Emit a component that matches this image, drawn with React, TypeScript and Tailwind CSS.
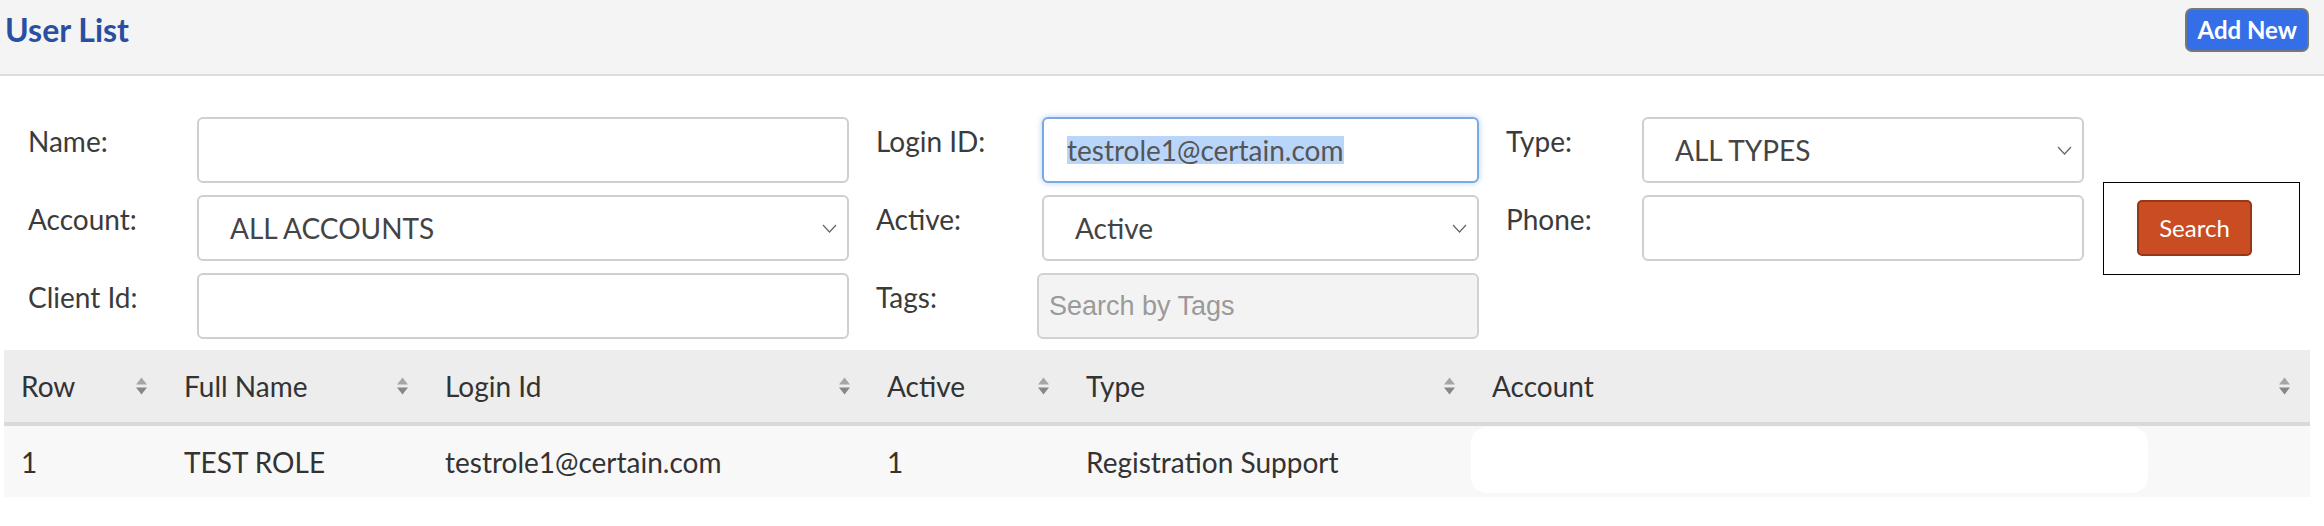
const FONT = "font-['Lato','Liberation_Sans',sans-serif]"

const COLUMNS = [
  { label: 'Row', w: 'w-[163px]' },
  { label: 'Full Name', w: 'w-[261px]' },
  { label: 'Login Id', w: 'w-[442px]' },
  { label: 'Active', w: 'w-[199px]' },
  { label: 'Type', w: 'w-[406px]' },
  { label: 'Account', w: 'w-[835px]' },
]

const ROW = ['1', 'TEST ROLE', 'testrole1@certain.com', '1', 'Registration Support']

function SortIcon() {
  return (
    <svg width="13" height="20" viewBox="0 0 13 20" className="shrink-0">
      <path d="M6.5 1.5 L12 8.5 H1 Z" fill="#a6a6a6" />
      <path d="M1 11.5 H12 L6.5 18.5 Z" fill="#878787" />
    </svg>
  )
}

function Chevron() {
  return (
    <svg width="15" height="9" viewBox="0 0 15 9" className="shrink-0">
      <path d="M1 1 L7.5 8 L14 1" fill="none" stroke="#666" strokeWidth="1.2" />
    </svg>
  )
}

function Label({ text, indent }: { text: string; indent?: boolean }) {
  return (
    <div className={`pt-[8px] text-[28px] leading-[1.2] text-[#3b3b3b] ${indent ? 'pl-[27px]' : ''}`}>{text}</div>
  )
}

function TextBox() {
  return <div className="h-[66px] rounded-[6px] border-2 border-[#cfcfcf] bg-white" />
}

function SelectBox({ value }: { value: string }) {
  return (
    <div className="h-[66px] rounded-[6px] border-2 border-[#cfcfcf] bg-white flex items-center justify-between pl-[31px] pr-[10px] text-[28px] text-[#444]">
      <span>{value}</span>
      <Chevron />
    </div>
  )
}

export default function App() {
  return (
    <div className={`${FONT} w-[2324px] h-[526px] bg-white overflow-hidden`}>
      <div className="h-[76px] bg-[#f4f4f4] border-b-2 border-[#dcdcdc] flex items-start justify-between pl-[5px] pr-[15px]">
        <h1 className="pt-[11px] text-[32px] font-bold leading-[1.2] text-[#2a4fa2]">User List</h1>
        <button className="mt-[8px] h-[44px] px-[10px] bg-[#356fe8] border-2 border-[#777] rounded-[7px] text-white text-[24px] font-bold leading-none">
          Add New
        </button>
      </div>

      <div className="grid grid-cols-[169px_652px_193px_437px_163px_442px_216px] grid-rows-[66px_66px_66px] gap-y-[12px] pl-[28px] pt-[41px]">
        <Label text="Name:" />
        <TextBox />
        <Label text="Login ID:" indent />
        <div className="h-[66px] rounded-[6px] border-2 border-[#79a9e3] bg-white shadow-[0_0_6px_rgba(90,145,225,0.45)] flex items-center pl-[23px] text-[28px] text-[#555]">
          <span className="bg-[#b9d6fa] leading-[28px]">testrole1@certain.com</span>
        </div>
        <Label text="Type:" indent />
        <SelectBox value="ALL TYPES" />
        <div />

        <Label text="Account:" />
        <SelectBox value="ALL ACCOUNTS" />
        <Label text="Active:" indent />
        <SelectBox value="Active" />
        <Label text="Phone:" indent />
        <TextBox />
        <div className="self-center ml-[19px] w-[197px] h-[93px] border border-black flex items-center pl-[33px]">
          <button className="w-[115px] h-[56px] bg-[#c94c22] border-2 border-[#963817] rounded-[5px] text-white text-[24px] leading-none">
            Search
          </button>
        </div>

        <Label text="Client Id:" />
        <TextBox />
        <Label text="Tags:" indent />
        <div className="-ml-[5px] h-[66px] rounded-[6px] border-2 border-[#d2d2d2] bg-[#f3f3f3] flex items-center pl-[10px] font-['Liberation_Sans',sans-serif] text-[27px] text-[#9a9a9a]">
          Search by Tags
        </div>
      </div>

      <div className="ml-[4px] mt-[11px] w-[2306px] text-[28px] text-[#333]">
        <div className="flex h-[76px] bg-[#ededed] border-b-4 border-[#d9d9d9]">
          {COLUMNS.map((c) => (
            <div key={c.label} className={`${c.w} flex items-center justify-between pl-[17px] pr-[19px]`}>
              <span>{c.label}</span>
              <SortIcon />
            </div>
          ))}
        </div>
        <div className="flex h-[71px] bg-[#f8f8f8]">
          {ROW.map((v, i) => (
            <div key={i} className={`${COLUMNS[i].w} flex items-center pl-[17px]`}>
              {v}
            </div>
          ))}
          <div className={`${COLUMNS[5].w} pt-[1px]`}>
            <div className="-ml-[4px] w-[677px] h-[66px] rounded-[16px] bg-white" />
          </div>
        </div>
      </div>
    </div>
  )
}
